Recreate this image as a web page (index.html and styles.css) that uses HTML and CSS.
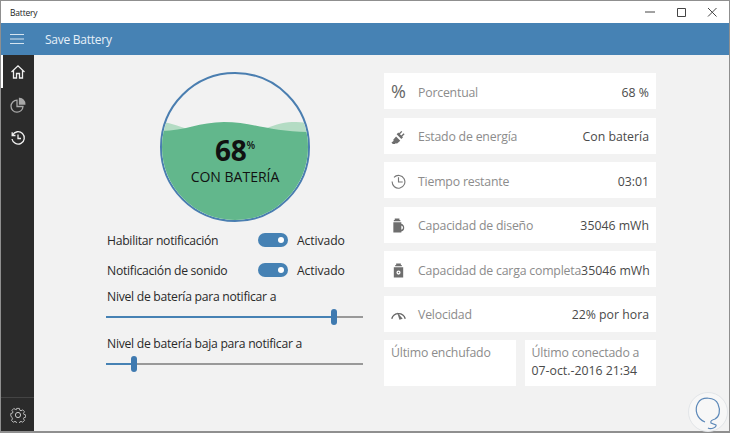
FILE: index.html
```html
<!DOCTYPE html>
<html lang="es">
<head>
<meta charset="utf-8">
<title>Battery</title>
<link rel="stylesheet" href="styles.css">
</head>
<body>
<div class="window">
  <div class="titlebar">
    <span class="title">Battery</span>
    <div class="controls">
      <svg class="ctl" viewBox="0 0 10 10"><path d="M0 5h10" /></svg>
      <svg class="ctl" viewBox="0 0 10 10"><path d="M1.500 1.500h8v8h-8z" /></svg>
      <svg class="ctl" viewBox="0 0 10 10"><path d="M1 1l8.500 8.500M9.500 1L1 9.500" /></svg>
    </div>
  </div>
  <header class="appbar">
    <svg class="burger" viewBox="0 0 14 10"><path d="M0 .5h14M0 5h14M0 9.500h14"/></svg>
    <span class="apptitle">Save Battery</span>
  </header>
  <div class="body">
    <nav class="rail">
      <div class="navitem active">
        <svg class="navicon" viewBox="0 0 16 16"><path d="M1.500 8L8 1.800 14.500 8M3.500 6.500V14H6.500V9.500H9.500V14H12.500V6.500"/></svg>
      </div>
      <div class="navitem dim">
        <svg class="navicon" viewBox="0 0 16 16"><path d="M7 3.200A6 6 0 1 0 13 9.500H7z"/><path d="M9.500 1.500A5.200 5.200 0 0 1 14.800 7H9.500z" fill="#a8a8a8"/></svg>
      </div>
      <div class="navitem">
        <svg class="navicon" viewBox="0 0 16 16"><path d="M2.600 5A6.200 6.200 0 1 1 2 9M2.200 2.200V5.500H5.500M8 4.500V8.500H11"/></svg>
      </div>
      <div class="rail-foot">
        <svg class="navicon gear" viewBox="0 0 16 16"><circle cx="8" cy="8" r="2.600"/><path d="M6.500 1h3l.5 2 1.400.6 1.800-1 2 2.100-1.100 1.700.5 1.300 1.900.5v2.600l-1.900.5-.5 1.300 1.100 1.700-2 2.100-1.800-1-1.400.6-.5 2h-3l-.5-2-1.400-.6-1.800 1-2-2.100 1.100-1.700-.5-1.300L0 9.300V6.700l1.900-.5.5-1.300-1.100-1.700 2-2.100 1.800 1L6 2.600z" transform="translate(.8 .5) scale(.9)"/></svg>
      </div>
    </nav>
    <main class="content">
      <section class="left">
        <div class="gauge">
          <svg class="wave" viewBox="0 0 146 146" preserveAspectRatio="none">
            <path class="wave-back" d="M0 48C10 49 18 53 30 56L100 56C110 52 120 48 130 48C136 48 141 48 146 49V146H0Z"/>
            <path class="wave-front" d="M0 57C22 57 38 48 62 48C90 48 110 58 146 58V146H0Z"/>
          </svg>
          <div class="gauge-text">
            <div class="pct">68<span class="pct-sign">%</span></div>
            <div class="state">CON BATERÍA</div>
          </div>
        </div>
        <div class="toggle-row">
          <span class="toggle-label">Habilitar notificación</span>
          <span class="switch"><span class="knob"></span></span>
          <span class="toggle-state">Activado</span>
        </div>
        <div class="toggle-row second">
          <span class="toggle-label">Notificación de sonido</span>
          <span class="switch"><span class="knob"></span></span>
          <span class="toggle-state">Activado</span>
        </div>
        <div class="slider-label first">Nivel de batería para notificar a</div>
        <div class="slider"><span class="fill" style="width:226px"></span><span class="thumb" style="left:225px"></span></div>
        <div class="slider-label">Nivel de batería baja para notificar a</div>
        <div class="slider"><span class="fill" style="width:25px"></span><span class="thumb" style="left:25px"></span></div>
      </section>
      <section class="right">
        <div class="card">
          <span class="ic pct-ic">%</span>
          <span class="k">Porcentual</span><span class="v">68 %</span>
        </div>
        <div class="card">
          <svg class="ic" viewBox="0 0 16 16"><path class="solid" d="M.5 14.500l2.500-2-.8-.8 3.200-3.700 4.500 4.500-3.700 3.200-.8-.8-2.500 2.200zM8.500 4.500l2.500-2.500 1 1-2.500 2.500 1.500 1.500 2.500-2.500 1 1-2.500 2.500.8.800-1.800 1.800-5-5 1.800-1.800z"/></svg>
          <span class="k">Estado de energía</span><span class="v">Con batería</span>
        </div>
        <div class="card">
          <svg class="ic line" viewBox="0 0 16 16"><path d="M3.200 3.500A6.800 6.800 0 1 1 1.200 8M8 3.500V8.500H12.500"/></svg>
          <span class="k">Tiempo restante</span><span class="v">03:01</span>
        </div>
        <div class="card">
          <svg class="ic" viewBox="0 0 16 16"><path class="solid" d="M4 .5h5v1.500h1v1.500H3V2h1zM2.500 4.500h8.500v1.600A4.400 4.400 0 0 1 11 14.500v1H2.500zM11 8v4.500a2.300 2.300 0 0 0 0-4.500z"/></svg>
          <span class="k">Capacidad de diseño</span><span class="v">35046 mWh</span>
        </div>
        <div class="card">
          <svg class="ic" viewBox="0 0 16 16"><path class="solid" fill-rule="evenodd" d="M5.500 .5h5v1.500h1v1.500h-7V2h1zM3 4.500h10v11H3zM8 8a2.200 2.200 0 1 0 0 4.400A2.200 2.200 0 0 0 8 8zM8 9.400a.8.8 0 1 1 0 1.600.8.8 0 0 1 0-1.600z"/></svg>
          <span class="k nowrap">Capacidad de carga completa</span><span class="v">35046 mWh</span>
        </div>
        <div class="card">
          <svg class="ic line gauge-ic" viewBox="0 0 16 16"><path d="M.8 12.500A7.500 7.500 0 0 1 15.200 12.500"/><path class="solid" d="M6.500 5.500l6 7-3.500 1z"/></svg>
          <span class="k">Velocidad</span><span class="v">22% por hora</span>
        </div>
        <div class="split">
          <div class="mini"><div class="k">Último enchufado</div></div>
          <div class="mini"><div class="k">Último conectado a</div><div class="v">07-oct.-2016 21:34</div></div>
        </div>
      </section>
    </main>
  </div>
  <svg class="stamp" viewBox="0 0 40 40">
    <circle cx="20" cy="20" r="19.500" fill="#f7f7f7" stroke="#e2e5e8"/>
    <path d="M17 30C9 27 6 18 10 11C14 4 27 5 30 12C33 19 31 25 27 27C24 28 22 29 23 31L28 33C29 35 23 38 20 36" fill="none" stroke="#5c88b8" stroke-width="1.200"/>
  </svg>
</div>
</body>
</html>
```

FILE: styles.css
```css
* { box-sizing: border-box; }
html, body { margin: 0; padding: 0; }
body { width: 730px; height: 433px; overflow: hidden; background: #f2f2f2; font-family: "Open Sans", "Noto Sans", sans-serif; }
.window { position: relative; width: 730px; height: 433px; display: flex; flex-direction: column; border: 1px solid #8f8f8f; border-width: 1px 1px 2px; }
.titlebar { height: 22px; flex: none; background: #fff; display: flex; align-items: center; justify-content: space-between; padding-left: 9px; }
.title { font-size: 8.500px; color: #222; letter-spacing: -.2px; }
.controls { display: flex; gap: 21px; padding-right: 12px; }
.ctl { width: 10px; height: 10px; fill: none; stroke: #444; stroke-width: 1; }
.appbar { height: 32px; flex: none; background: #4682b4; display: flex; align-items: center; color: #fff; }
.burger { width: 14px; height: 10px; margin-left: 9px; fill: none; stroke: #d5e4f0; stroke-width: 1; }
.apptitle { margin-left: 21px; font-size: 12px; color: #e6f0f8; letter-spacing: -.25px; }
.body { flex: 1; display: flex; min-height: 0; }
.rail { width: 33px; flex: none; background: #2b2b2b; display: flex; flex-direction: column; }
.navitem { height: 33px; display: flex; align-items: center; justify-content: center; }
.navitem.active { box-shadow: inset 2px 0 0 #fff; }
.navicon { width: 16px; height: 16px; fill: none; stroke: #f0f0f0; stroke-width: 1.300; }
.navitem.dim .navicon { stroke: #a8a8a8; }
.rail-foot { margin-top: auto; height: 34px; border-top: 1px solid #444; display: flex; align-items: center; justify-content: center; }
.gear { stroke: #c8c8c8; stroke-width: 1; }
.content { flex: 1; display: flex; min-width: 0; }
.left { width: 350px; flex: none; padding: 17px 0 0 72px; font-size: 12.200px; color: #2a2a2a; }
.gauge { position: relative; width: 150px; height: 150px; margin-left: 54px; border: 2px solid #4a7eb0; border-radius: 50%; overflow: hidden; background: #f2f2f2; }
.wave { position: absolute; inset: 0; width: 100%; height: 100%; }
.wave-back { fill: #b4dcc4; }
.wave-front { fill: #62b78c; }
.gauge-text { position: absolute; left: 0; right: 0; top: 54px; text-align: center; color: #111; }
.pct { font-size: 28px; font-weight: 700; line-height: 34px; letter-spacing: -.3px; }
.pct-sign { font-size: 10px; font-weight: 600; vertical-align: 12px; }
.state { font-size: 14px; line-height: 20px; margin-top: 0; }
.toggle-row { display: flex; align-items: center; height: 20px; margin-top: 8px; }
.toggle-row.second { margin-top: 10px; }
.toggle-label { width: 152px; letter-spacing: -.28px; margin-left: 1px; margin-right: -1px; }
.switch { width: 30px; height: 14px; border-radius: 7px; background: #4682b4; position: relative; }
.knob { position: absolute; right: 4px; top: 4px; width: 6px; height: 6px; border-radius: 50%; background: #fff; }
.toggle-state { margin-left: 9px; letter-spacing: -.1px; }
.slider-label { height: 18px; line-height: 18px; margin-top: 17px; letter-spacing: -.28px; padding-left: 1px; }
.slider-label.first { margin-top: 8px; }
.slider { position: relative; width: 257px; height: 2px; margin-top: 10px; background: #999; }
.fill { position: absolute; left: 0; top: 0; height: 2px; background: #4682b4; }
.thumb { position: absolute; top: -7px; width: 6px; height: 16px; border-radius: 3px; background: #3f7ab0; }
.right { width: 272px; padding-top: 18px; display: flex; flex-direction: column; gap: 8.500px; font-size: 12.300px; }
.card { height: 36px; flex: none; background: #fff; display: flex; align-items: center; padding: 2px 7px 0 7px; }
.ic { width: 15px; height: 15px; flex: none; margin-right: 12px; fill: none; stroke: none; color: #666; }
.pct-ic { font-size: 18px; line-height: 15px; text-align: center; color: #666; margin-top: -2px; }
.solid { fill: #6e6e6e; stroke: none; }
.line { stroke: #777; stroke-width: 1.200; }
.gauge-ic { stroke-width: 1.500; stroke: #666; }
.k { color: #8c8c8c; letter-spacing: -.2px; }
.v { color: #4a4a4a; margin-left: auto; white-space: nowrap; }
.nowrap { white-space: nowrap; }
.split { display: flex; gap: 9px; height: 46px; }
.mini { flex: 1; background: #fff; padding: 4px 7px; line-height: 18px; }
.mini .v { margin: 0; }
.stamp { position: absolute; right: 1px; bottom: -1px; width: 40px; height: 40px; }
```
